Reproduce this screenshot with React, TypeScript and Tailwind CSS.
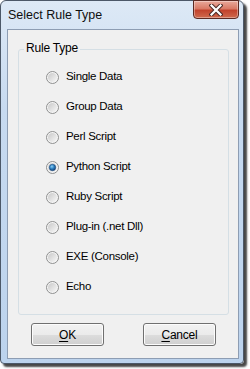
import React from "react";

const OPTIONS = [
  "Single Data",
  "Group Data",
  "Perl Script",
  "Python Script",
  "Ruby Script",
  "Plug-in (.net Dll)",
  "EXE (Console)",
  "Echo",
];

const Radio = ({ checked }: { checked: boolean }) => (
  <svg width="13" height="13" viewBox="0 0 13 13" className="shrink-0">
    <defs>
      <linearGradient id="rb" x1="0" y1="0" x2="1" y2="1">
        <stop offset="0" stopColor="#c9c9c9" />
        <stop offset="1" stopColor="#f7f7f7" />
      </linearGradient>
      <radialGradient id="dot" cx="0.4" cy="0.35" r="0.7">
        <stop offset="0" stopColor="#8fd0f5" />
        <stop offset="0.5" stopColor="#2a7fc0" />
        <stop offset="1" stopColor="#12376a" />
      </radialGradient>
    </defs>
    <circle cx="6.5" cy="6.5" r="6" fill="#f4f4f4" stroke="#8e8f8f" />
    <circle cx="6.5" cy="6.5" r="4.5" fill="url(#rb)" />
    {checked && <circle cx="6.5" cy="6.5" r="3.2" fill="url(#dot)" stroke="#1b4a80" strokeWidth="0.6" />}
  </svg>
);

const Button = ({ accel, rest }: { accel: string; rest: string }) => (
  <button className="w-[73px] h-[23px] rounded-[3px] border border-[#707070] bg-[linear-gradient(#f2f2f2_0%,#ebebeb_50%,#dddddd_51%,#cfcfcf_100%)] shadow-[inset_0_0_0_1px_#fcfcfc] text-[12px] tracking-[-0.2px] text-black flex items-center justify-center">
    <span>
      <span className="underline underline-offset-[2px]">{accel}</span>
      {rest}
    </span>
  </button>
);

export default function App() {
  return (
    <div className="w-[250px] h-[369px] bg-white font-['Liberation_Sans',Arial,sans-serif]">
      <div className="w-[244px] h-[364px] flex flex-col rounded-t-[6px] rounded-b-[4px] border border-[#4c5868] bg-[linear-gradient(#dde9f6,#c7daf0_30%,#bcd3ed)] shadow-[3px_3px_2px_rgba(0,0,0,0.72)]">
        {/* Title bar */}
        <div className="h-[28px] flex items-start shrink-0">
          <div className="pl-[7px] pt-[7px] text-[12.5px] text-[#101010] leading-[15px] flex-1">Select Rule Type</div>
          <div className="mr-[4px] mt-[-1px] w-[46px] h-[19px] rounded-b-[4px] border border-[#5c2a23] bg-[linear-gradient(#e9a99b_0%,#d97a66_45%,#c2432d_55%,#cf6a4e_100%)] shadow-[inset_0_0_0_1px_rgba(255,255,255,0.35)] flex items-center justify-center">
            <svg width="14" height="12" viewBox="0 0 14 12">
              <path d="M2.5 1.5 L11.5 10.5 M11.5 1.5 L2.5 10.5" stroke="#4a2a26" strokeWidth="4.2" strokeLinecap="square" />
              <path d="M2.5 1.5 L11.5 10.5 M11.5 1.5 L2.5 10.5" stroke="#ffffff" strokeWidth="2.2" strokeLinecap="square" />
            </svg>
          </div>
        </div>

        {/* Client area */}
        <div className="ml-[6px] mr-[4px] h-[330px] border border-[#8d9db3] bg-[#f0f0f0] flex flex-col">
          <div className="relative mt-[19px] ml-[10px] w-[211px] h-[266px] border border-[#d5dfe5] rounded-[3px]">
            <span className="absolute left-[5px] top-[-9px] px-[2px] bg-[#f0f0f0] text-[12px] tracking-[-0.2px] leading-[15px] text-black">Rule Type</span>
            <div className="pt-[12px] flex flex-col">
              {OPTIONS.map((o) => (
                <div key={o} className="h-[30px] flex items-center pl-[27px] gap-[7px] text-[11.5px] tracking-[-0.3px] text-black">
                  <Radio checked={o === "Python Script"} />
                  <span>{o}</span>
                </div>
              ))}
            </div>
          </div>
          <div className="mt-[8px] pl-[23px] flex gap-[39px]">
            <Button accel="O" rest="K" />
            <Button accel="C" rest="ancel" />
          </div>
        </div>
      </div>
    </div>
  );
}
